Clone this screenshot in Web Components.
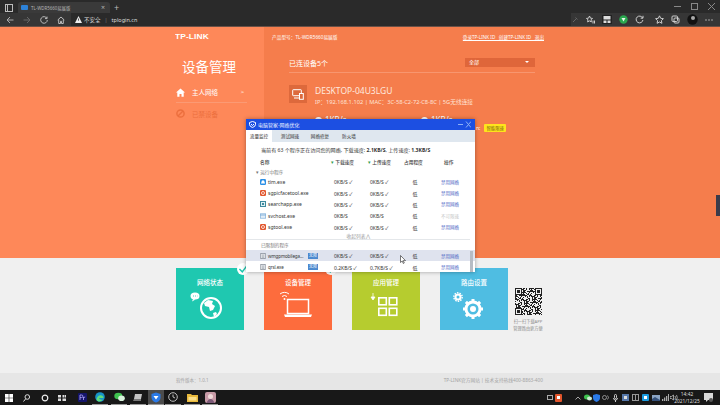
<!DOCTYPE html>
<html lang="zh">
<head>
<meta charset="utf-8">
<title>TL-WDR5660易展版</title>
<style>
  html, body { margin: 0; padding: 0; }
  body { width: 720px; height: 405px; overflow: hidden; position: relative; background: #f0f0f0;
    font-family: "Noto Sans", "Noto Sans CJK SC", sans-serif; display: flex; flex-direction: column; }
</style>
</head>
<body>
<browser-bar></browser-bar>
<router-top>
  <router-side></router-side>
  <router-main></router-main>
</router-top>
<router-bottom>
  <home-tile color="#1fc8b0" label="网络状态" kind="globe"></home-tile>
  <home-tile color="#fd6c3d" label="设备管理" kind="laptop"></home-tile>
  <home-tile color="#b6cc2f" label="应用管理" kind="apps"></home-tile>
  <home-tile color="#4fbde2" label="路由设置" kind="gear"></home-tile>
</router-bottom>
<win-taskbar></win-taskbar>
<net-dialog>
  <net-row icon="tim" name="tim.exe" dl="0KB/S ✓" ul="0KB/S ✓" op="禁用网络"></net-row>
  <net-row icon="sg" name="sgpicfacetool.exe" dl="0KB/S ✓" ul="0KB/S ✓" op="禁用网络"></net-row>
  <net-row icon="search" name="searchapp.exe" dl="0KB/S ✓" ul="0KB/S ✓" op="禁用网络"></net-row>
  <net-row icon="svc" name="svchost.exe" dl="0KB/S" ul="0KB/S" op="不可限速" off></net-row>
  <net-row icon="sg" name="sgtool.exe" dl="0KB/S ✓" ul="0KB/S ✓" op="禁用网络"></net-row>
  <net-row slot="limited" icon="doc" name="wmgpmobilega..." badge="无限" dl="0KB/S ✓" ul="0KB/S ✓" op="禁用网络" hot></net-row>
  <net-row slot="limited" icon="doc" name="qrsl.exe" badge="无限" dl="0.2KB/S ✓" ul="0.7KB/S ✓" op="禁用网络"></net-row>
</net-dialog>

<script>
function shadow(el, html) {
  el.attachShadow({ mode: 'open' }).innerHTML = html;
}

customElements.define('browser-bar', class extends HTMLElement {
  connectedCallback() {
    shadow(this, `<style>
      :host { display: block; height: 27px; background: #2a2a2a; color: #ccc; flex: none; }
      .tabs { height: 13px; display: flex; align-items: flex-end; position: relative; }
      .tab { margin-left: 18px; width: 92px; height: 11px; background: #3a3a3a; border-radius: 3px 3px 0 0;
        display: flex; align-items: center; font-size: 4.4px; color: #b5b5b5; box-sizing: border-box; padding-left: 3px; }
      .fav { width: 7px; height: 5px; background: #2d82d8; border-radius: 1px; margin-right: 3px; flex: none; }
      .tab span { flex: 1; }
      .tab i { font-style: normal; font-size: 7px; margin-right: 5px; }
      .plus { font-size: 9px; margin-left: 4px; line-height: 11px; color: #bbb; }
      .win { position: absolute; left: 4px; top: 3px; }
      .ctl { margin-left: auto; display: flex; gap: 10px; padding-right: 5px; align-self: center; }
      .ctl svg { display: block; }
      .tool { height: 13px; background: #363636; border-bottom: 1px solid #6a5046; display: flex; align-items: center; position: relative; }
      .nav { display: flex; gap: 9px; padding-left: 6px; width: 64px; flex: none; box-sizing: border-box; }
      .addr { margin-left: 7px; display: flex; align-items: center; font-size: 5.5px; color: #ddd; height: 13px; background: #2a2a2a; width: 500px; padding-left: 4px; box-sizing: border-box; }
      .addr b { font-weight: 400; color: #777; margin: 0 4px; }
      .ext { display: flex; align-items: center; gap: 7px; position: absolute; left: 571px; }
      svg { flex: none; }
    </style>
    <div class="tabs">
      <svg class="win" width="10" height="10" viewBox="0 0 10 10" fill="none" stroke="#bbb"><rect x="1.5" y="1.5" width="7" height="7"/><path d="M3.5 1.5v7"/></svg>
      <div class="tab"><div class="fav"></div><span>TL-WDR5660易展版</span><i>×</i></div>
      <div class="plus">+</div>
      <div class="ctl">
        <svg width="7" height="7" viewBox="0 0 7 7" stroke="#888" fill="none"><path d="M0 3.5h7"/></svg>
        <svg width="7" height="7" viewBox="0 0 7 7" stroke="#888" fill="none"><rect x=".5" y=".5" width="6" height="6"/></svg>
        <svg width="7" height="7" viewBox="0 0 7 7" stroke="#888" fill="none"><path d="M0 0l7 7M7 0L0 7"/></svg>
      </div>
    </div>
    <div class="tool">
      <div class="nav">
        <svg width="8" height="8" viewBox="0 0 8 8" fill="none" stroke="#aaa"><path d="M7.5 4H1M4 1L1 4l3 3"/></svg>
        <svg width="8" height="8" viewBox="0 0 8 8" fill="none" stroke="#666"><path d="M.5 4H7M4 1l3 3-3 3"/></svg>
        <svg width="8" height="8" viewBox="0 0 8 8" fill="none" stroke="#bbb"><path d="M6.8 2.2A3.3 3.3 0 1 0 7.3 4M7 .6v2H5"/></svg>
        <svg width="8" height="8" viewBox="0 0 8 8" fill="none" stroke="#bbb"><path d="M.7 4L4 1l3.3 3M1.7 3.5v4h1.8V5.3h1v2.2h1.8v-4"/></svg>
      </div>
      <div class="addr">
        <svg width="7" height="7" viewBox="0 0 7 7" style="margin-right:2px"><path d="M3.5 0L7 7H0z" fill="#eee"/><path d="M3.5 2.5v2.2" stroke="#333" stroke-width=".8"/></svg>
        不安全<b>|</b>tplogin.cn
      </div>
      <div class="ext">
        <svg width="8" height="8" viewBox="0 0 8 8" fill="none" stroke="#666"><path d="M2 6l3.5-3.5M4.5 1.5l2 2"/></svg>
        <svg width="9" height="9" viewBox="0 0 9 9" fill="none" stroke="#ccc"><path d="M3.5 1l1 2.2 2 .2-1.5 1.5.4 2-1.9-1-1.9 1 .4-2L.5 3.4l2-.2zM7 5.5v3M8.5 5.5v3"/></svg>
        <svg width="10" height="9" viewBox="0 0 10 9"><rect width="10" height="9" fill="#222"/><rect x="1.5" y="1" width="7" height="3.5" fill="#ddd"/><rect x="1.5" y="5.5" width="3" height="2.5" fill="#ddd"/><rect x="5.5" y="5.5" width="3" height="2.5" fill="#ddd"/></svg>
        <svg width="9" height="9" viewBox="0 0 9 9"><circle cx="4.5" cy="4.5" r="4.2" fill="#2aa84f"/><path d="M2.5 3h4L4.5 6.5z" fill="#e6f6ea"/></svg>
        <svg width="9" height="9" viewBox="0 0 9 9" fill="none" stroke="#ccc"><path d="M7.6 3A3.4 3.4 0 1 0 7.9 5M8 .8v2.4H5.7"/></svg>
        <svg width="9" height="9" viewBox="0 0 9 9" fill="none" stroke="#ccc" style="margin-left:4px"><path d="M4.5 .8l1.2 2.5 2.7.4-2 1.9.5 2.7-2.4-1.3-2.4 1.3.5-2.7-2-1.9 2.7-.4z"/></svg>
        <svg width="9" height="9" viewBox="0 0 9 9" fill="none" stroke="#ccc"><rect x="1" y="1" width="5.5" height="5.5" rx="1"/><rect x="3" y="3" width="5" height="5" rx="1"/></svg>
        <svg width="11" height="11" viewBox="0 0 11 11"><circle cx="5.5" cy="5.5" r="5.2" fill="#111"/><circle cx="6" cy="4" r="2" fill="#aaa"/></svg>
        <svg width="8" height="8" viewBox="0 0 8 8" fill="#ccc"><circle cx="1" cy="4" r=".7"/><circle cx="4" cy="4" r=".7"/><circle cx="7" cy="4" r=".7"/></svg>
      </div>
    </div>`);
  }
});

customElements.define('router-top', class extends HTMLElement {
  connectedCallback() {
    shadow(this, `<style>
      :host { display: flex; height: 231px; flex: none; color: #fff; overflow: hidden; }
    </style><slot></slot>`);
  }
});

customElements.define('router-side', class extends HTMLElement {
  connectedCallback() {
    shadow(this, `<style>
      :host { display: block; width: 264px; flex: none; background: #fe8859; box-sizing: border-box; padding: 4px 17px 0 176px; }
      .logo { font: 700 7.5px/8px "Liberation Sans", sans-serif; letter-spacing: .1px; color: #fff; transform: scaleX(1.12); transform-origin: left; margin: 0 0 0 -1px; position: relative; top: 2px; }
      h1 { font: 400 13.5px/18px "Noto Sans CJK SC", sans-serif; margin: 18px 0 0 6px; white-space: nowrap; }
      .item { display: flex; align-items: center; height: 21px; font-size: 6.5px; gap: 7px; }
      .item span { flex: 1; }
      .first { margin-top: 7px; border-bottom: 1px solid #fb9a74; height: 20px; }
      .off { color: #ec6f3e; }
      .arrow { font-size: 6px; margin-right: 3px; }
      svg { flex: none; display: block; }
    </style>
    <div class="logo">TP-LINK</div>
    <h1>设备管理</h1>
    <div class="item first">
      <svg width="9" height="9" viewBox="0 0 9 9" fill="#fff"><path d="M4.5.5L0 4.6h1.3V8.800h2.2V6h2v2.800h2.200V4.600H9z"/></svg>
      <span>主人网络</span><i class="arrow">&gt;</i>
    </div>
    <div class="item off">
      <svg width="9" height="9" viewBox="0 0 9 9" fill="none" stroke="#ec6f3e" stroke-width="1.5"><circle cx="4.5" cy="4.5" r="3.6"/><path d="M2 7l5-5"/></svg>
      <span>已禁设备</span>
    </div>`);
  }
});

customElements.define('router-main', class extends HTMLElement {
  connectedCallback() {
    shadow(this, `<style>
      :host { display: block; flex: 1; background: #f57d4c; box-sizing: border-box; padding: 5px 0 0 8px; position: relative; }
      .head { display: flex; font-size: 4.7px; line-height: 10px; height: 10px; width: 272px; }
      .head div:last-child { margin-left: auto; text-decoration: underline; white-space: pre; font-size: 4.6px; }
      .wrap { margin: 11px 0 0 17px; width: 246px; }
      .title { display: flex; align-items: center; justify-content: space-between; height: 20px; border-bottom: 1px solid #f8966f; font-size: 7px; box-sizing: border-box; }
      .select { width: 70px; height: 9px; background: #df663a; font-size: 5px; line-height: 9px; padding: 0 4px; box-sizing: border-box; display: flex; justify-content: space-between; align-items: center; margin-top: -1px; }
      .select i { width: 0; height: 0; border: 2px solid transparent; border-top: 2.5px solid #fff; border-bottom: 0; margin-right: 2px; }
      .dev { display: flex; gap: 8px; margin-top: 12px; }
      .box { width: 18px; height: 18px; background: #dd693c; display: flex; align-items: center; justify-content: center; }
      .name { font-size: 8.5px; line-height: 12px; color: #ffe9df; }
      .ip { font-size: 5.7px; line-height: 8px; margin-top: 1px; white-space: nowrap; color: #ffe3d6; }
      .rates { display: flex; margin: 9px 0 0 26px; font-size: 8px; line-height: 10px; align-items: center; }
      .rates span { display: flex; align-items: center; gap: 3px; width: 106px; }
      .rates i { width: 7px; height: 7px; border-radius: 50%; background: #fff; display: block; }
      .limit { display: flex; align-items: center; margin: -1px 0 0 187px; font-size: 5px; gap: 4px; }
      .limit b { background: #ffe41c; color: #7a6510; font-weight: 400; font-size: 4.4px; height: 8px; line-height: 8px; padding: 0 2px; border-radius: 1px; text-align: center; white-space: nowrap; }
      .edge { position: absolute; right: 0; top: 168px; width: 4px; height: 21px; background: #3b3b4a; }
    </style>
    <div class="head"><div>产品型号：TL-WDR5660易展版</div><div>登录TP-LINK ID   创建TP-LINK ID   退出</div></div>
    <div class="wrap">
      <div class="title"><span>已连设备5个</span><div class="select">全部<i></i></div></div>
      <div class="dev">
        <div class="box"><svg width="12" height="11" viewBox="0 0 12 11" fill="none" stroke="#fff"><rect x=".7" y=".7" width="8.6" height="6" rx=".5"/><path d="M2 9h5"/><rect x="7.5" y="4.5" width="3.8" height="5.8" fill="#dd693c"/></svg></div>
        <div>
          <div class="name">DESKTOP-04U3LGU</div>
          <div class="ip">IP：192.168.1.102 | MAC：3C-58-C2-72-C8-8C | 5G无线连接</div>
        </div>
      </div>
      <div class="rates"><span><i></i>1KB/s</span><span><i></i>1KB/s</span></div>
      <div class="limit">n: <b>智能限速</b></div>
    </div>
    <div class="edge"></div>`);
  }
});

const TILE_ART = {
  globe: `<circle cx="33" cy="28" r="10" fill="none" stroke="#fff" stroke-width="2"/>
    <path d="M26 23l4-3 5 1-1 3 3 2-2 4-3 1-1-4-4-1zM35 33l3-1 1 2-3 3z" fill="#fff"/>
    <ellipse cx="17" cy="16" rx="4.500" ry="3.600" fill="#fff"/><path d="M15 19l-1 2.500 3.500-2z" fill="#fff"/>
    <path d="M15 16h4.500" stroke="#1fc8b0" stroke-width=".8" stroke-dasharray="1 1"/>`,
  laptop: `<path d="M14 14a7 7 0 0 1 9 0M16 16.500a4 4 0 0 1 5 0" fill="none" stroke="#fff"/><circle cx="18.500" cy="19" r="1" fill="#fff"/>
    <rect x="21.500" y="19.500" width="21" height="14" fill="none" stroke="#fff" stroke-width="1.500"/>
    <path d="M18 34.500h28l-1 2.500H19z" fill="#fff"/>`,
  apps: `<path d="M19 13v5M17 17l2 3 2-3z" fill="#fff" stroke="#fff" stroke-width=".8"/>
    <g fill="none" stroke="#fff" stroke-width="1.600"><rect x="24.800" y="17.800" width="7.500" height="7"/><rect x="35.300" y="17.800" width="7.500" height="7"/><rect x="24.800" y="28.300" width="7.500" height="7"/><rect x="35.300" y="28.300" width="7.500" height="7"/></g>`,
  gear: `<circle cx="16" cy="17" r="2.500" fill="none" stroke="#fff" stroke-width="2"/>
    <circle cx="16" cy="17" r="4.200" fill="none" stroke="#fff" stroke-width="1.400" stroke-dasharray="1.500 1.100"/>
    <circle cx="31" cy="29" r="7" fill="none" stroke="#fff" stroke-width="3"/>
    <g stroke="#fff" stroke-width="3"><path d="M31 19v3M31 36v3M21 29h3M38 29h3M23.900 21.900l2 2M36.100 34.100l2 2M38.100 21.900l-2 2M25.900 34.100l-2 2"/></g>
    <circle cx="31" cy="29" r="3" fill="#fff"/>`
};

customElements.define('home-tile', class extends HTMLElement {
  connectedCallback() {
    const kind = this.getAttribute('kind');
    const check = kind === 'globe' || kind === 'laptop';
    shadow(this, `<style>
      :host { display: block; width: 68px; height: 62px; flex: none; background: ${this.getAttribute('color')}; color: #fff; position: relative; font-size: 6.5px; text-align: center; line-height: 14px; padding-top: 8px; box-sizing: border-box; font-weight: 500; }
      svg { display: block; position: absolute; left: 2px; top: 12px; }
      .chk { position: absolute; right: -5px; top: -5px; width: 12px; height: 12px; border-radius: 50%; background: #fff; }
      .chk svg { left: 1px; top: 1px; }
    </style>${this.getAttribute('label')}
    <svg width="64" height="48" viewBox="0 0 64 48">${TILE_ART[kind]}</svg>
    ${check ? `<div class="chk"><svg width="10" height="10" viewBox="0 0 7 7" fill="none" stroke="#1fc8b0"><path d="M1 3.500l2 2 3-4"/></svg></div>` : ''}`);
  }
});

customElements.define('router-bottom', class extends HTMLElement {
  connectedCallback() {
    shadow(this, `<style>
      :host { display: flex; flex-direction: column; flex: none; height: 132px; background: #f0f0f0; }
      .tiles { display: flex; padding: 10px 0 0 176px; height: 115px; box-sizing: border-box; }
      ::slotted(home-tile) { margin-right: 20px; }
      .qr { margin: 20px 0 0 -17px; width: 34px; text-align: center; font-size: 4.2px; line-height: 7px; color: #8c8c8c; white-space: nowrap; }
      .qr svg { display: block; margin: 0 auto 3px; }
      footer { flex: 1; background: #e6e6e6; display: flex; align-items: center; font-size: 4.5px; color: #a3a3a3; padding: 0 0 3px 176px; }
      footer span:last-child { margin-left: 235px; font-size: 4.7px; }
    </style>
    <div class="tiles"><slot></slot>
      <div class="qr"><svg id="q" width="27" height="27" viewBox="0 0 27 27" shape-rendering="crispEdges"></svg>扫一扫下载APP<br>管理路由更方便</div>
    </div>
    <footer><span>软件版本：1.0.1</span><span>TP-LINK官方网站 | 技术支持热线400-8863-400</span></footer>`);
    let p = '';
    let s = 7;
    for (let y = 0; y < 27; y++) for (let x = 0; x < 27; x++) {
      s = (s * 73 + 41) % 101;
      const corner = (x < 7 && y < 7) || (x > 19 && y < 7) || (x < 7 && y > 19);
      if (!corner && s % 2) p += 'M' + x + ' ' + y + 'h1v1h-1z';
    }
    const finder = (x, y) => `M${x} ${y}h7v7h-7zM${x + 1} ${y + 1}v5h5v-5zM${x + 2} ${y + 2}h3v3h-3z`;
    this.shadowRoot.getElementById('q').innerHTML =
      `<path d="${p}" fill="#222"/><path d="${finder(0, 0)}${finder(20, 0)}${finder(0, 20)}" fill="#222" fill-rule="evenodd"/>`;
  }
});

customElements.define('win-taskbar', class extends HTMLElement {
  connectedCallback() {
    shadow(this, `<style>
      :host { display: flex; height: 15px; background: #181818; flex: none; align-items: center; position: relative; color: #ddd; overflow: hidden; }
      .i { position: absolute; top: 0; height: 15px; width: 16px; display: flex; align-items: center; justify-content: center; box-sizing: border-box; }
      .run { border-bottom: 1px solid #9a9a9a; }
      .act { background: #4c4c4c; }
      .clock { position: absolute; left: 672px; top: 0; width: 30px; text-align: center; font-size: 4.8px; line-height: 7px; padding-top: .5px; color: #ddd; white-space: nowrap; }
      svg { display: block; }
    </style>
    <div class="i" style="left:1px"><svg width="8" height="8" viewBox="0 0 8 8" fill="#fff"><path d="M0 0h3.700v3.700H0zM4.300 0H8v3.700H4.300zM0 4.300h3.700V8H0zM4.300 4.300H8V8H4.300z"/></svg></div>
    <div class="i" style="left:18px"><svg width="7" height="8" viewBox="0 0 7 8" fill="none" stroke="#ddd"><circle cx="4.300" cy="3" r="2.300"/><path d="M2.700 4.800L.5 7.500"/></svg></div>
    <div class="i" style="left:37px"><svg width="8" height="8" viewBox="0 0 8 8" fill="none" stroke="#eee" stroke-width="1.200"><circle cx="4" cy="4" r="2.800"/></svg></div>
    <div class="i" style="left:54px"><svg width="8" height="8" viewBox="0 0 8 8" fill="#ddd"><path d="M0 1h3v2.500H0zM0 4.500h3V7H0zM4.500 1H6v2.500H4.500zM4.500 4.500H8V7H4.500zM6.500 1H8v2.500H6.500z"/></svg></div>
    <div class="i" style="left:74px"><svg width="9" height="9" viewBox="0 0 9 9"><rect width="9" height="9" rx="1" fill="#14146a"/><path d="M2 7V2h1.600a1.200 1.200 0 0 1 0 2.600H2M5.500 7V4M5.500 5q.5-1 1.700-1" fill="none" stroke="#b6a9ff" stroke-width=".8"/></svg></div>
    <div class="i run" style="left:92px"><svg width="10" height="10" viewBox="0 0 10 10"><circle cx="5" cy="5" r="4.800" fill="#1893c8"/><path d="M1.500 7Q3 2 7 3.500q2 1 1.500 2.500H4q.5 2.500 4 1.500Q6 10 3.500 9.500 1.800 9 1.500 7z" fill="#5fdc7c"/></svg></div>
    <div class="i run" style="left:111px"><svg width="11" height="10" viewBox="0 0 11 10" fill="#3fc24f"><ellipse cx="4.300" cy="4" rx="4" ry="3.300"/><ellipse cx="7.500" cy="6.300" rx="3.300" ry="2.800" fill="#d9f2dc"/></svg></div>
    <div class="i run" style="left:130px"><svg width="10" height="9" viewBox="0 0 10 9"><path d="M2 1h7L8 6H1z" fill="#c4c4c4"/><path d="M1 6h7v2H0z" fill="#777"/></svg></div>
    <div class="i run act" style="left:148px"><svg width="10" height="11" viewBox="0 0 10 11"><path d="M5 .500l4.500 1.500v3.500Q9.500 9 5 10.500 .5 9 .5 5.500V2z" fill="#2a7ae8"/><path d="M2.500 4h5L5 7.500z" fill="#fff"/></svg></div>
    <div class="i run" style="left:165px"><svg width="10" height="10" viewBox="0 0 10 10" fill="none" stroke="#bdbdbd"><circle cx="5" cy="5" r="4.300"/><path d="M5 2.500V5l2 1"/></svg></div>
    <div class="i run" style="left:184px"><svg width="11" height="9" viewBox="0 0 11 9"><path d="M0 1h4l1 1h6v7H0z" fill="#e8b93c"/><rect x="1.500" y="4" width="8" height="3.500" fill="#fbe08a"/></svg></div>
    <div class="i run" style="left:202px"><svg width="11" height="11" viewBox="0 0 11 11"><rect width="11" height="11" rx="2" fill="#c79aa6"/><circle cx="5.500" cy="4.500" r="2.500" fill="#efd9d8"/><path d="M1.500 11Q3 7 5.500 7T9.500 11z" fill="#7c5a78"/></svg></div>
    <div class="i" style="left:546px;width:8px"><svg width="6" height="6" viewBox="0 0 6 6" fill="none" stroke="#aaa"><rect x=".5" y=".5" width="5" height="4"/></svg></div>
    <div class="i" style="left:554px;width:9px"><svg width="7" height="8" viewBox="0 0 7 8"><rect width="7" height="8" rx="1" fill="#e2552b"/><rect x="2" y="2" width="3" height="3" fill="#fff"/></svg></div>
    <div class="i" style="left:574px;width:8px"><svg width="6" height="4" viewBox="0 0 6 4" fill="none" stroke="#ccc" stroke-width=".8"><path d="M.5 3.500L3 1l2.500 2.500"/></svg></div>
    <div class="i" style="left:583px;width:9px"><svg width="8" height="7" viewBox="0 0 8 7" fill="#3fc24f"><ellipse cx="3" cy="3" rx="3" ry="2.500"/><ellipse cx="5.500" cy="4.500" rx="2.500" ry="2" fill="#cfeed4"/></svg></div>
    <div class="i" style="left:592px;width:9px"><svg width="7" height="8" viewBox="0 0 7 8"><path d="M3.500 0L7 1v3Q7 6.500 3.500 8 0 6.500 0 4V1z" fill="#2a7ae8"/></svg></div>
    <div class="i" style="left:601px;width:9px"><svg width="8" height="7" viewBox="0 0 8 7" fill="none" stroke="#aaa" stroke-width=".8"><circle cx="2.500" cy="3.500" r="2"/><path d="M5.500 1.500q2 2 0 4"/></svg></div>
    <div class="i" style="left:611px;width:9px"><svg width="5" height="8" viewBox="0 0 5 8" fill="none" stroke="#ccc"><rect x="1.500" y=".5" width="2" height="4" rx="1"/><path d="M.5 4q0 2 2 2t2-2M2.500 6v2"/></svg></div>
    <div class="i" style="left:621px;width:9px"><svg width="7" height="7" viewBox="0 0 7 7"><rect width="7" height="7" fill="#5577aa"/><rect x="2" y="2" width="3" height="3" fill="#ddd"/></svg></div>
    <div class="i" style="left:631px;width:9px"><svg width="7" height="7" viewBox="0 0 7 7" fill="none" stroke="#999"><rect x=".5" y=".5" width="6" height="6"/><path d="M3.500 .5v6"/></svg></div>
    <div class="i" style="left:641px;width:9px"><svg width="7" height="7" viewBox="0 0 7 7"><rect width="7" height="7" rx="1" fill="#1b9ce0"/><rect x="2" y="2" width="3" height="3" fill="#fff"/></svg></div>
    <div class="i" style="left:651px;width:9px"><svg width="8" height="6" viewBox="0 0 8 6"><rect width="8" height="6" fill="#8aa4c4"/><path d="M0 4l3-2 5 3v1H0z" fill="#34507a"/></svg></div>
    <div class="i" style="left:661px;width:9px"><svg width="7" height="7" viewBox="0 0 7 7" fill="#aaa"><path d="M0 5h1.300v2H0zM2 3.500h1.300V7H2zM4 2h1.300v5H4zM6 0h1v7H6z"/></svg></div>
    <div class="i" style="left:669px;width:9px"><svg width="8" height="7" viewBox="0 0 8 7" fill="none" stroke="#bbb" stroke-width=".8"><path d="M0 2.500h1.500L3.500 1v5L1.500 4.500H0zM5 2q1 1.500 0 3M6.500 1q1.500 2.500 0 5"/></svg></div>
    <div class="clock">14:42<br>2021/12/25</div>
    <div class="i" style="left:700px"><svg width="9" height="9" viewBox="0 0 9 9"><path d="M0 0h9v7H4L2 9V7H0z" fill="#d8d8d8"/><circle cx="7" cy="7" r="2" fill="#555"/></svg></div>`);
  }
});

const ROW_ICONS = {
  tim: `<rect width="6" height="6" rx="1.300" fill="#2a8fe6"/><path d="M3 1.200a1.500 1.500 0 0 1 1.500 1.500L5 4.500H1l.5-1.800A1.500 1.500 0 0 1 3 1.200z" fill="#fff"/>`,
  sg: `<rect width="6" height="6" rx="1.300" fill="#e2562d"/><circle cx="3" cy="3" r="1.500" fill="none" stroke="#fff" stroke-width=".8"/>`,
  search: `<rect width="6" height="6" fill="#3f8a9e"/><rect x="1" y="1" width="4" height="4" fill="#dff0f4"/><rect x="2" y="2" width="2" height="2" fill="#3f8a9e"/>`,
  svc: `<rect x=".3" y=".8" width="5.400" height="4.400" fill="#e3eef8" stroke="#6fa5d5" stroke-width=".6"/><path d="M.3 2h5.400" stroke="#6fa5d5" stroke-width=".8"/>`,
  doc: `<rect x=".8" y=".3" width="4.400" height="5.400" fill="#eef0f3" stroke="#77808c" stroke-width=".7"/><path d="M2 2h2M2 3.200h2M2 4.400h2" stroke="#77808c" stroke-width=".5"/>`
};

customElements.define('net-row', class extends HTMLElement {
  connectedCallback() {
    const a = n => this.getAttribute(n) || '';
    const badge = a('badge');
    shadow(this, `<style>
      :host { display: grid; grid-template-columns: 74px 36px 33px 38px 1fr; align-items: center; height: 11.4px; padding-left: 14px; font-size: 5px; color: #333; background: ${this.hasAttribute('hot') ? '#dfe3ee' : 'transparent'}; white-space: nowrap; }
      .n { display: flex; align-items: center; gap: 2px; }
      .n svg { display: block; flex: none; }
      .n span { ${badge ? 'width: 38px; font-size: 4.5px; letter-spacing: -.1px;' : ''} }
      .n b { background: #4a88cf; color: #fff; font-weight: 400; font-size: 4px; width: 10px; height: 6px; line-height: 6px; text-align: center; flex: none; }
      .c { text-align: center; padding-right: 14px; }
      .op { color: ${this.hasAttribute('off') ? '#c6c6c6' : '#4c63c4'}; font-size: 4.5px; }
    </style>
    <div class="n"><svg width="6" height="6" viewBox="0 0 6 6">${ROW_ICONS[a('icon')]}</svg><span>${a('name')}</span>${badge ? `<b>${badge}</b>` : ''}</div>
    <div>${a('dl')}</div><div>${a('ul')}</div><div class="c">低</div><div class="op">${a('op')}</div>`);
  }
});

customElements.define('net-dialog', class extends HTMLElement {
  connectedCallback() {
    shadow(this, `<style>
      :host { display: block; position: absolute; left: 246px; top: 119px; width: 229px; height: 153px; background: #fff; box-shadow: 0 0 4px rgba(0,0,0,.35); color: #333; font-size: 5px; overflow: hidden; }
      .bar { height: 11px; background: #1c4fe2; color: #e8eeff; display: flex; align-items: center; padding: 0 4px 0 3px; gap: 2px; font-size: 5px; }
      .bar span { flex: 1; }
      .bar svg { display: block; }
      .tabs { height: 12px; background: #dfe7ef; display: flex; font-size: 4.6px; line-height: 12px; }
      .tabs div { text-align: center; }
      .sum { padding: 4px 0 0 15px; line-height: 8px; white-space: nowrap; font-size: 5.1px; height: 12px; box-sizing: border-box; }
      .sum b { font-weight: 700; }
      .hd { display: grid; grid-template-columns: 71px 37px 36px 40px 1fr; height: 11px; line-height: 11px; padding-left: 14px; box-sizing: border-box; font-size: 4.7px; font-weight: 500; color: #444; white-space: nowrap; margin-top: 3px; }
      .hd u { text-decoration: none; color: #2f9e4f; }
      .grp { padding-left: 10px; line-height: 8px; height: 8px; font-size: 4.6px; color: #777; white-space: nowrap; }
      .more { text-align: center; color: #9a9a9a; line-height: 6px; height: 7px; border-bottom: 1px solid #e4e7ea; margin-right: 5px; box-sizing: border-box; font-size: 4.8px; }
      .grp2 { padding-left: 15px; line-height: 11px; height: 10px; font-size: 4.6px; color: #777; white-space: nowrap; }
      .thumb { position: absolute; right: 2px; top: 132px; width: 3px; height: 21px; background: #b6bcc4; }
      .cursor { position: absolute; left: 154px; top: 136px; display: block; }
    </style>
    <div class="bar">
      <svg width="7" height="7" viewBox="0 0 7 7" fill="none" stroke="#fff"><path d="M3.500 .5L6.500 1.500v2Q6.500 5.500 3.500 6.500 .5 5.500 .5 3.500v-2zM2 3l1.500 1.500L5 3"/></svg>
      <span>电脑管家-网络优化</span>
      <svg width="16" height="7" viewBox="0 0 16 7" fill="none" stroke="#8eb0f5"><path d="M3 3.500h5M11 .5l5 6M16 .5l-5 6"/></svg>
    </div>
    <div class="tabs">
      <div style="width:26px;background:#fff">流量监控</div><div style="width:36px">测试网速</div><div style="width:24px">网络修复</div><div style="width:34px">防火墙</div>
    </div>
    <div class="sum">当前有 63 个程序正在访问您的网络, 下载速度: <b>2.1KB/S</b>, 上传速度: <b>1.3KB/S</b></div>
    <div class="hd"><div>名称</div><div><u>▾</u> 下载速度</div><div><u>▾</u> 上传速度</div><div>占用程度</div><div>操作</div></div>
    <div class="grp">▾ 运行中程序</div>
    <slot></slot>
    <div class="more">收起列表⋀</div>
    <div class="grp2">已限制的程序</div>
    <slot name="limited"></slot>
    <div class="thumb"></div>
    <svg class="cursor" width="6" height="9" viewBox="0 0 6 9"><path d="M.5.500v7l1.700-1.500 1.100 2.500 1-.5L3.200 5.600h2.300z" fill="#fff" stroke="#222" stroke-width=".6"/></svg>`);
  }
});
</script>
</body>
</html>
